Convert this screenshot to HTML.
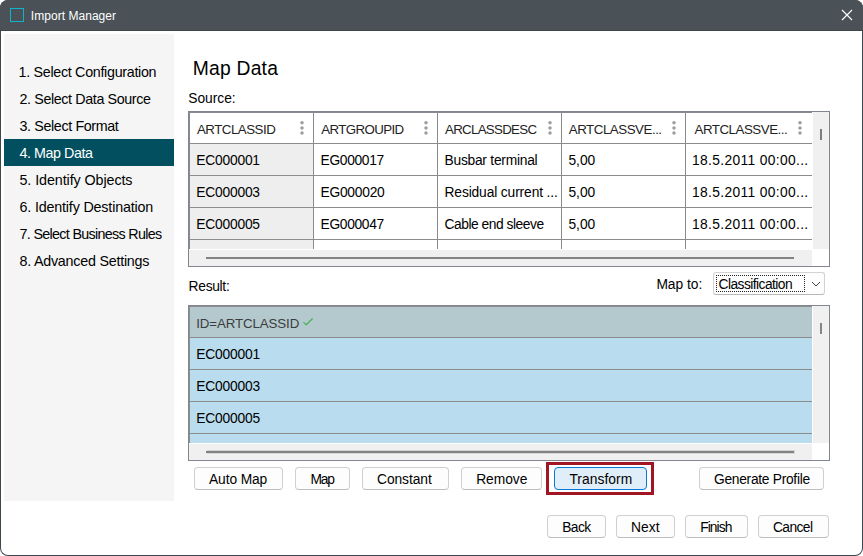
<!DOCTYPE html>
<html lang="en">
<head>
<meta charset="utf-8">
<title>Import Manager</title>
<style>
  html, body { margin: 0; padding: 0; }
  body { width: 863px; height: 556px; background: #ffffff; overflow: hidden; position: relative;
         font-family: "Liberation Sans", "DejaVu Sans", sans-serif; font-size: 13px; color: #111111; }
  .abs { position: absolute; }
  .win { position: absolute; left: 0; top: 0; width: 863px; height: 556px;
         border-radius: 8px; background: #3b464d; overflow: hidden; }
  .o { position: absolute; left: 0; top: 0; width: 863px; height: 556px; }
  .client { position: absolute; left: 1px; top: 31px; width: 861px; height: 524px; background: #ffffff;
         border-radius: 0 0 7px 7px; }
  .t { position: absolute; height: 40px; line-height: 40px; white-space: nowrap; }
  .title { position: absolute; left: 0; top: 0; width: 863px; height: 30px; background: #4a5257; }
  .ico { position: absolute; left: 10px; top: 8px; width: 14px; height: 14px; box-sizing: border-box;
         border: solid #12b2cc; border-width: 1.1px 1.4px 1.7px 1.4px; }
  .side { position: absolute; left: 4px; top: 34px; width: 170px; height: 467px; background: #f5f5f5; }
  .sel { position: absolute; left: 4px; top: 139px; width: 170px; height: 27px; background: #014f5f; }
  .grid { position: absolute; left: 188px; width: 642px; height: 156px; box-sizing: border-box;
         border: 1px solid #82878f; background: #ffffff; }
  .ln { position: absolute; background: #8c8c8c; }
    circle { fill: #9d9d9d; }
  .btn { position: absolute; height: 23px; box-sizing: border-box; border: 1px solid #d0d0d0; border-bottom-color: #bdbdbd;
         border-radius: 4px; background: #fdfdfd; }
</style>
</head>
<body>
<div class="win"><div class="o">

  <div class="client"></div>
  <!-- title bar -->
  <div class="title">
    <div class="ico"></div>
    <svg class="abs" style="left:840px;top:8px" width="14" height="14" viewBox="0 0 14 14">
      <path d="M2 2 L12 12 M12 2 L2 12" stroke="#ffffff" stroke-width="1.1" fill="none"/>
    </svg>
  </div>
  <div class="t" style="left:30.8px;top:-4px;font-size:12px;letter-spacing:0.04px;color:#ffffff">Import Manager</div>

  <!-- wizard steps -->
  <div class="side"></div>
  <div class="sel"></div>
  <div class="t" style="left:18.5px;top:52px;font-size:14.3px;letter-spacing:-0.3px;color:#000000">1. Select Configuration</div>
  <div class="t" style="left:19.5px;top:79px;font-size:14.3px;letter-spacing:-0.38px;color:#000000">2. Select Data Source</div>
  <div class="t" style="left:19.5px;top:106px;font-size:14.3px;letter-spacing:-0.37px;color:#000000">3. Select Format</div>
  <div class="t" style="left:19.5px;top:133px;font-size:14.3px;letter-spacing:-0.45px;color:#ffffff">4. Map Data</div>
  <div class="t" style="left:19.5px;top:160px;font-size:14.3px;letter-spacing:-0.08px;color:#000000">5. Identify Objects</div>
  <div class="t" style="left:19.5px;top:187px;font-size:14.3px;letter-spacing:-0.17px;color:#000000">6. Identify Destination</div>
  <div class="t" style="left:19.5px;top:214px;font-size:14.3px;letter-spacing:-0.67px;color:#000000">7. Select Business Rules</div>
  <div class="t" style="left:19.5px;top:241px;font-size:14.3px;letter-spacing:-0.23px;color:#000000">8. Advanced Settings</div>

  <div class="t" style="left:192.8px;top:48.6px;font-size:19.3px;letter-spacing:0.21px;color:#000000">Map Data</div>
  <div class="t" style="left:188.3px;top:78.6px;font-size:13.8px;letter-spacing:-0.03px;color:#000000">Source:</div>

  <!-- SOURCE GRID (page coords: x 188..829, y 111..266) -->
  <div class="grid" style="top:111px"></div>
  <div class="abs" style="left:190px;top:144px;width:123px;height:105px;background:#eeeeee"></div>
  <div class="abs" style="left:813px;top:112px;width:16px;height:137px;background:#f0f0f0"></div>
  <div class="abs" style="left:189px;top:250px;width:623px;height:16px;background:#f0f0f0"></div>
  <div class="abs" style="left:820px;top:129px;width:2px;height:11px;background:#7d7d7d"></div>
  <div class="abs" style="left:206px;top:257px;width:588px;height:2px;background:#828282"></div>
  <div class="ln" style="left:189px;top:112px;width:623px;height:1px;background:#878b91"></div>
  <div class="ln" style="left:189px;top:112px;width:1px;height:137px;background:#878b91"></div>
  <div class="ln" style="left:189px;top:143px;width:623px;height:1px"></div>
  <div class="ln" style="left:189px;top:175px;width:623px;height:1px"></div>
  <div class="ln" style="left:189px;top:207px;width:623px;height:1px"></div>
  <div class="ln" style="left:189px;top:239px;width:623px;height:1px"></div>
  <div class="ln" style="left:313px;top:112px;width:1px;height:137px"></div>
  <div class="ln" style="left:437px;top:112px;width:1px;height:137px"></div>
  <div class="ln" style="left:561px;top:112px;width:1px;height:137px"></div>
  <div class="ln" style="left:685px;top:112px;width:1px;height:137px"></div>
  <svg class="abs" style="left:300px;top:120px" width="4" height="16" viewBox="0 0 4 16"><circle cx="2" cy="2.8" r="1.75"/><circle cx="2" cy="8" r="1.75"/><circle cx="2" cy="13.1" r="1.75"/></svg>
  <svg class="abs" style="left:424px;top:120px" width="4" height="16" viewBox="0 0 4 16"><circle cx="2" cy="2.8" r="1.75"/><circle cx="2" cy="8" r="1.75"/><circle cx="2" cy="13.1" r="1.75"/></svg>
  <svg class="abs" style="left:548px;top:120px" width="4" height="16" viewBox="0 0 4 16"><circle cx="2" cy="2.8" r="1.75"/><circle cx="2" cy="8" r="1.75"/><circle cx="2" cy="13.1" r="1.75"/></svg>
  <svg class="abs" style="left:672px;top:120px" width="4" height="16" viewBox="0 0 4 16"><circle cx="2" cy="2.8" r="1.75"/><circle cx="2" cy="8" r="1.75"/><circle cx="2" cy="13.1" r="1.75"/></svg>
  <svg class="abs" style="left:798px;top:120px" width="4" height="16" viewBox="0 0 4 16"><circle cx="2" cy="2.8" r="1.75"/><circle cx="2" cy="8" r="1.75"/><circle cx="2" cy="13.1" r="1.75"/></svg>
  <div class="t" style="left:197px;top:109.6px;font-size:13.3px;letter-spacing:-0.5px;color:#222222">ARTCLASSID</div>
  <div class="t" style="left:321.2px;top:109.6px;font-size:13.3px;letter-spacing:-0.61px;color:#222222">ARTGROUPID</div>
  <div class="t" style="left:445px;top:109.6px;font-size:13.3px;letter-spacing:-0.7px;color:#222222">ARCLASSDESC</div>
  <div class="t" style="left:568.8px;top:109.6px;font-size:13.3px;letter-spacing:-0.46px;color:#222222">ARTCLASSVE...</div>
  <div class="t" style="left:694.5px;top:109.6px;font-size:13.3px;letter-spacing:-0.46px;color:#222222">ARTCLASSVE...</div>
  <div class="t" style="left:196.3px;top:140.5px;font-size:13.8px;letter-spacing:-0.21px;color:#000000">EC000001</div>
  <div class="t" style="left:320.5px;top:140.5px;font-size:13.8px;letter-spacing:-0.32px;color:#000000">EG000017</div>
  <div class="t" style="left:444.5px;top:140.5px;font-size:13.8px;letter-spacing:-0.25px;color:#000000">Busbar terminal</div>
  <div class="t" style="left:568.4px;top:140.5px;font-size:13.8px;letter-spacing:0.0px;color:#000000">5,00</div>
  <div class="t" style="left:692px;top:140.5px;font-size:13.8px;letter-spacing:0.35px;color:#000000">18.5.2011 00:00...</div>
  <div class="t" style="left:196.3px;top:172.5px;font-size:13.8px;letter-spacing:-0.21px;color:#000000">EC000003</div>
  <div class="t" style="left:320.5px;top:172.5px;font-size:13.8px;letter-spacing:-0.25px;color:#000000">EG000020</div>
  <div class="t" style="left:444.5px;top:172.5px;font-size:13.8px;letter-spacing:-0.13px;color:#000000">Residual current ...</div>
  <div class="t" style="left:568.4px;top:172.5px;font-size:13.8px;letter-spacing:0.0px;color:#000000">5,00</div>
  <div class="t" style="left:692px;top:172.5px;font-size:13.8px;letter-spacing:0.35px;color:#000000">18.5.2011 00:00...</div>
  <div class="t" style="left:196.3px;top:204.5px;font-size:13.8px;letter-spacing:-0.21px;color:#000000">EC000005</div>
  <div class="t" style="left:320.5px;top:204.5px;font-size:13.8px;letter-spacing:-0.32px;color:#000000">EG000047</div>
  <div class="t" style="left:444.5px;top:204.5px;font-size:13.8px;letter-spacing:-0.47px;color:#000000">Cable end sleeve</div>
  <div class="t" style="left:568.4px;top:204.5px;font-size:13.8px;letter-spacing:0.0px;color:#000000">5,00</div>
  <div class="t" style="left:692px;top:204.5px;font-size:13.8px;letter-spacing:0.35px;color:#000000">18.5.2011 00:00...</div>

  <div class="t" style="left:188.6px;top:266.5px;font-size:13.8px;letter-spacing:-0.3px;color:#000000">Result:</div>
  <div class="t" style="left:656.4px;top:264.8px;font-size:13.8px;letter-spacing:-0.02px;color:#000000">Map to:</div>

  <!-- combobox -->
  <div class="abs" style="left:713px;top:272px;width:112px;height:23px;box-sizing:border-box;border:1px solid #d2d2d2;border-bottom-color:#b8b8b8;border-radius:3px;background:#fdfdfd"></div>
  <div class="abs" style="left:716px;top:275px;width:89px;height:17px;box-sizing:border-box;border:1px dotted #222222"></div>
  <div class="t" style="left:718.6px;top:265px;font-size:13.8px;letter-spacing:-0.56px;color:#000000">Classification</div>
  <svg class="abs" style="left:810px;top:280px" width="12" height="8" viewBox="0 0 12 8">
    <path d="M2 2 L6 6 L10 2" stroke="#444444" stroke-width="1" fill="none"/>
  </svg>

  <!-- RESULT GRID (page coords: x 188..829, y 305..460) -->
  <div class="grid" style="top:305px"></div>
  <div class="abs" style="left:190px;top:307px;width:622px;height:30px;background:#b3c9ce"></div>
  <div class="abs" style="left:190px;top:338px;width:622px;height:105px;background:#b9dcee"></div>
  <div class="abs" style="left:813px;top:306px;width:16px;height:137px;background:#f0f0f0"></div>
  <div class="abs" style="left:189px;top:444px;width:623px;height:16px;background:#f0f0f0"></div>
  <div class="abs" style="left:820px;top:323px;width:2px;height:11px;background:#858585"></div>
  <div class="abs" style="left:206px;top:451px;width:588px;height:2px;background:#828282;box-shadow:1px -1px 0 #d3d3d3, 1px 1px 0 #d8d8d8"></div>
  <div class="ln" style="left:189px;top:306px;width:623px;height:1px"></div>
  <div class="ln" style="left:189px;top:306px;width:1px;height:137px"></div>
  <div class="ln" style="left:189px;top:337px;width:623px;height:1px"></div>
  <div class="ln" style="left:189px;top:369px;width:623px;height:1px"></div>
  <div class="ln" style="left:189px;top:401px;width:623px;height:1px"></div>
  <div class="ln" style="left:189px;top:433px;width:623px;height:1px"></div>
  <div class="t" style="left:196.2px;top:303.6px;font-size:13.3px;letter-spacing:-0.1px;color:#3c3c3c">ID=ARTCLASSID</div>
  <svg class="abs" style="left:302px;top:317px" width="12" height="10" viewBox="0 0 12 10">
    <path d="M1.4 5.4 L4.25 7.7 L10.6 1.5" stroke="#43b04a" stroke-width="1.15" fill="none"/>
  </svg>
  <div class="t" style="left:196.3px;top:334.6px;font-size:13.8px;letter-spacing:-0.19px;color:#000000">EC000001</div>
  <div class="t" style="left:196.3px;top:366.6px;font-size:13.8px;letter-spacing:-0.19px;color:#000000">EC000003</div>
  <div class="t" style="left:196.3px;top:398.6px;font-size:13.8px;letter-spacing:-0.19px;color:#000000">EC000005</div>

  <!-- action buttons -->
  <div class="btn" style="left:194px;top:467px;width:89px"></div>
  <div class="btn" style="left:295px;top:467px;width:55px"></div>
  <div class="btn" style="left:362px;top:467px;width:87px"></div>
  <div class="btn" style="left:461px;top:467px;width:81px"></div>
  <div class="abs" style="left:546px;top:462px;width:108px;height:33px;box-sizing:border-box;border:3px solid #a01622"></div>
  <div class="btn" style="left:554px;top:467px;width:93px;background:#e0eef9;border-color:#0a78d4"></div>
  <div class="btn" style="left:699px;top:467px;width:125px"></div>
  <div class="t" style="left:209px;top:459.8px;font-size:13.8px;letter-spacing:-0.11px;color:#000000">Auto Map</div>
  <div class="t" style="left:310.4px;top:459.8px;font-size:13.8px;letter-spacing:-1.2px;color:#000000">Map</div>
  <div class="t" style="left:377px;top:459.8px;font-size:13.8px;letter-spacing:-0.07px;color:#000000">Constant</div>
  <div class="t" style="left:476.2px;top:459.8px;font-size:13.8px;letter-spacing:-0.05px;color:#000000">Remove</div>
  <div class="t" style="left:569.4px;top:459.8px;font-size:13.8px;letter-spacing:0.06px;color:#000000">Transform</div>
  <div class="t" style="left:714px;top:459.8px;font-size:13.8px;letter-spacing:-0.29px;color:#000000">Generate Profile</div>

  <!-- wizard navigation -->
  <div class="btn" style="left:547px;top:515px;width:59px"></div>
  <div class="btn" style="left:616px;top:515px;width:59px"></div>
  <div class="btn" style="left:685px;top:515px;width:63px"></div>
  <div class="btn" style="left:758px;top:515px;width:71px"></div>
  <div class="t" style="left:562.2px;top:507.6px;font-size:13.8px;letter-spacing:-0.57px;color:#000000">Back</div>
  <div class="t" style="left:631.1px;top:507.6px;font-size:13.8px;letter-spacing:0.0px;color:#000000">Next</div>
  <div class="t" style="left:700.2px;top:507.6px;font-size:13.8px;letter-spacing:-0.92px;color:#000000">Finish</div>
  <div class="t" style="left:772.9px;top:507.6px;font-size:13.8px;letter-spacing:-0.56px;color:#000000">Cancel</div>

</div></div>
</body>
</html>
